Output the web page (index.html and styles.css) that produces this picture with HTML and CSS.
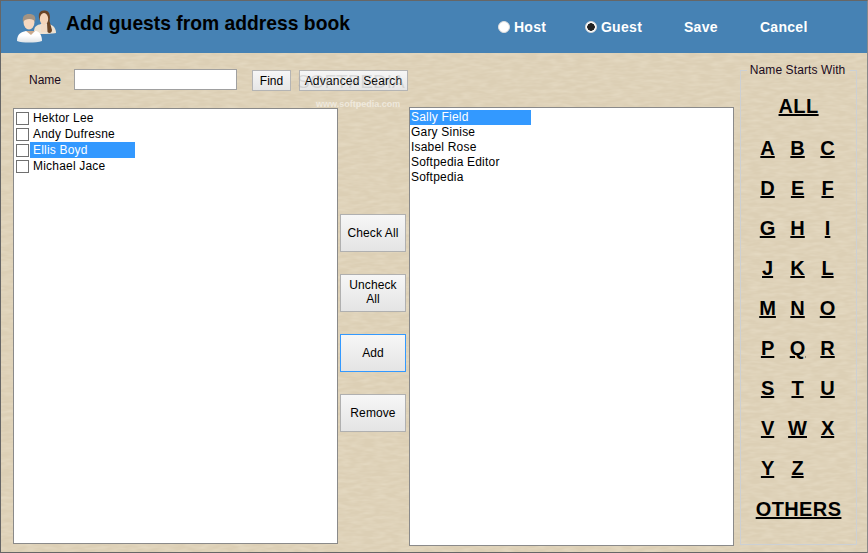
FILE: index.html
```html
<!DOCTYPE html>
<html lang="en">
<head>
    <meta charset="UTF-8">
    <meta name="viewport" content="width=device-width, initial-scale=1.0">
    <title>Add guests from address book</title>
    <link rel="stylesheet" href="styles.css">
</head>
<body>

<!-- Title bar -->
<header class="topbar">
    <svg class="guests-icon" width="54" height="44" viewBox="14 4 54 44">
        <defs>
            <filter id="soft"><feGaussianBlur stdDeviation="0.35"/></filter>
            <linearGradient id="shirt" x1="0" y1="0" x2="0" y2="1">
                <stop offset="0.4" stop-color="#ffffff"/>
                <stop offset="1" stop-color="#dfe3e6"/>
            </linearGradient>
        </defs>
        <g filter="url(#soft)">
            <!-- woman, behind -->
            <path d="M34 31 C34 25 37 24 41 23 L49 23 C53 24 56 27 56 32 C54 33 38 33 35 33 Z" fill="#eee2d2"/>
            <path d="M39.500 19 C38 13 39 10 44 9.500 C49 9 51 14 49.500 20 L52 29 C52 32 49 33 47.500 31 L47 22 Z" fill="#6b4526"/>
            <ellipse cx="44" cy="18" rx="4.200" ry="6" fill="#f5d6ba"/>
            <path d="M41 24 L47 24 L47 31 L41 31 Z" fill="#f2dcc6"/>
            <!-- man, in front -->
            <path d="M17 40 C17 33 21 31 26 30 L36 30 C40 31 42 35 42 40 C36 42 22 42 17 40 Z" fill="url(#shirt)"/>
            <path d="M26 30 L35 30 L31 34 Z" fill="#c9a98d"/>
            <ellipse cx="29" cy="21" rx="5.500" ry="7.500" fill="#f5d8c0"/>
            <path d="M23 21 C22 15 25 13 29 13 C34 13 36 15 35 21 C34 17 25 17 23 21 Z" fill="#a39382"/>
        </g>
    </svg>
    <h1 class="page-title">Add guests from address book</h1>
    <div class="top-actions">
        <label class="radio-item host-item"><span class="radio"></span>Host</label>
        <label class="radio-item guest-item"><span class="radio checked"></span>Guest</label>
        <a class="top-link save-link">Save</a>
        <a class="top-link">Cancel</a>
    </div>
</header>

<div class="main">
    <div class="picker">
        <!-- Search row -->
        <div class="search-row">
            <label class="name-label" for="name">Name</label>
            <input class="name-input" type="text" id="name">
            <button class="small-btn find-btn">Find</button>
            <button class="small-btn adv-btn">Advanced Search</button>
            <span class="mark-big">SOFTPEDIA</span>
            <span class="mark-small">www.softpedia.com</span>
        </div>

        <div class="lists">
            <ul class="list check-list">
                <li><span class="box"></span><span class="check-name">Hektor Lee</span></li>
                <li><span class="box"></span><span class="check-name">Andy Dufresne</span></li>
                <li><span class="box"></span><span class="check-name selected">Ellis Boyd</span></li>
                <li><span class="box"></span><span class="check-name">Michael Jace</span></li>
            </ul>

            <div class="move-btns">
                <button class="move-btn">Check All</button>
                <button class="move-btn two-line">Uncheck All</button>
                <button class="move-btn focused">Add</button>
                <button class="move-btn">Remove</button>
            </div>

            <ul class="list guest-list">
                <li class="selected">Sally Field</li>
                <li>Gary Sinise</li>
                <li>Isabel Rose</li>
                <li>Softpedia Editor</li>
                <li>Softpedia</li>
            </ul>
        </div>
    </div>

    <!-- Alphabet filter -->
    <fieldset class="letters">
        <legend>Name Starts With</legend>
        <a class="wide-letter all-letter" href="#">ALL</a>
        <div class="letter-grid">
            <a href="#">A</a><a href="#">B</a><a href="#">C</a>
            <a href="#">D</a><a href="#">E</a><a href="#">F</a>
            <a href="#">G</a><a href="#">H</a><a href="#">I</a>
            <a href="#">J</a><a href="#">K</a><a href="#">L</a>
            <a href="#">M</a><a href="#">N</a><a href="#">O</a>
            <a href="#">P</a><a href="#">Q</a><a href="#">R</a>
            <a href="#">S</a><a href="#">T</a><a href="#">U</a>
            <a href="#">V</a><a href="#">W</a><a href="#">X</a>
            <a href="#">Y</a><a href="#">Z</a>
        </div>
        <a class="wide-letter" href="#">OTHERS</a>
    </fieldset>
</div>

</body>
</html>
```

FILE: styles.css
```css
/* General styles */
* {
    box-sizing: border-box;
}

html, body {
    height: 100%;
}

body {
    margin: 0;
    font-family: "Liberation Sans", Arial, sans-serif;
    font-size: 12px;
    color: #000;
    background-color: #dccfb5;
    background-image: url("data:image/svg+xml,%3Csvg xmlns='http://www.w3.org/2000/svg' width='868' height='553'%3E%3Cfilter id='t'%3E%3CfeTurbulence type='fractalNoise' baseFrequency='.08 .3' numOctaves='2'/%3E%3CfeColorMatrix values='0 0 0 0 1 0 0 0 0 .95 0 0 0 0 .82 .42 0 0 0 -.14'/%3E%3C/filter%3E%3Crect width='868' height='553' filter='url(%23t)'/%3E%3C/svg%3E");
    border: 1px solid #666;
    border-right-color: #888;
    overflow: hidden;
    display: flex;
    flex-direction: column;
}

/* Title bar */
.topbar {
    height: 52px;
    flex-shrink: 0;
    background-color: #4682b4;
    display: flex;
    align-items: center;
    padding-left: 13px;
}

.guests-icon {
    flex-shrink: 0;
}

.page-title {
    margin: -7px 0 0 -2px;
    font-size: 19.3px;
    font-weight: bold;
    white-space: nowrap;
}

.top-actions {
    display: flex;
    align-items: center;
    margin: -1px 0 0 148px;
    color: #fff;
    font-size: 14px;
    font-weight: bold;
    letter-spacing: .3px;
}

.radio-item {
    display: flex;
    align-items: center;
    gap: 4px;
}

.host-item {
    width: 87px;
}

.guest-item {
    width: 99px;
}

.radio {
    width: 12px;
    height: 12px;
    border-radius: 50%;
    background: #fff;
    border: 1px solid #ddd;
}

.radio.checked {
    background: radial-gradient(circle, #222 3.5px, #fff 4px);
}

.top-link {
    white-space: nowrap;
}

.save-link {
    width: 76px;
}

/* Main area */
.main {
    flex: 1;
    min-height: 0;
    display: flex;
    padding: 0 10px 7px 12px;
}

.picker {
    width: 722px;
    display: flex;
    flex-direction: column;
}

.search-row {
    position: relative;
    height: 55px;
    flex-shrink: 0;
    display: flex;
    align-items: flex-start;
    padding-top: 16px;
}

.name-label {
    margin: 4px 0 0 16px;
    width: 45px;
    font-size: 12px;
    color: #1a0a20;
}

.name-input {
    width: 163px;
    height: 21px;
    border: 1px solid #a0a0a0;
    background: #fff;
    padding: 0;
    margin-right: 15px;
}

.small-btn {
    height: 21px;
    margin-top: 1px;
    padding: 0;
    font-family: inherit;
    font-size: 12px;
    color: #000;
    border: 1px solid #b4b4b4;
    background: linear-gradient(#f6f6f6, #e6e6e6);
}

.find-btn {
    width: 39px;
    margin-right: 8px;
}

.adv-btn {
    width: 109px;
    letter-spacing: .2px;
}

/* Softpedia watermark */
.mark-big {
    position: absolute;
    left: 284px;
    top: 18px;
    font-size: 19px;
    color: rgba(170, 170, 170, .35);
}

.mark-small {
    position: absolute;
    left: 303px;
    top: 46px;
    font-size: 9px;
    font-weight: bold;
    color: rgba(255, 255, 255, .5);
}

/* Lists */
.lists {
    flex: 1;
    min-height: 0;
    display: flex;
}

.list {
    list-style-type: none;
    margin: 0;
    background: #fff;
    border: 1px solid #8a8a8a;
}

.check-list {
    width: 325px;
    height: 436px;
    padding: 1px 0 0 2px;
}

.check-list li {
    display: flex;
    align-items: center;
    height: 16px;
}

.box {
    width: 13px;
    height: 13px;
    border: 1px solid #707070;
    background: #fff;
    flex-shrink: 0;
}

.check-name {
    padding-left: 3px;
    width: 105px;
    height: 16px;
    line-height: 16px;
    margin-left: 1px;
    letter-spacing: .2px;
}

.selected {
    background-color: #3399ff;
    color: #fff;
}

.guest-list {
    width: 325px;
    height: 439px;
    margin: -1px 0 0 3px;
    padding: 2px 0 0 0;
}

.guest-list li {
    width: 121px;
    height: 15px;
    line-height: 15px;
    padding-left: 1px;
    letter-spacing: .2px;
}

/* Middle buttons */
.move-btns {
    width: 66px;
    margin: 106px 0 0 2px;
    display: flex;
    flex-direction: column;
    gap: 22px;
}

.move-btn {
    height: 38px;
    padding: 0 4px;
    font-family: inherit;
    font-size: 12px;
    line-height: 14px;
    letter-spacing: .1px;
    color: #000;
    border: 1px solid #b0b0b0;
    background: linear-gradient(#f6f6f6, #e4e4e4);
}

.move-btn.two-line {
    padding-bottom: 2px;
}

.move-btn.focused {
    border-color: #3399ff;
}

/* Alphabet filter */
.letters {
    margin: 10px 0 0 6px;
    width: 117px;
    padding: 0;
    border: 1px solid #ccd0d4;
    text-align: center;
    display: flex;
    flex-direction: column;
}

.letters legend {
    padding: 0 4px;
    margin: 0 auto;
    font-size: 12px;
    letter-spacing: .1px;
    color: #1a0a20;
    transform: translateX(-1px);
}

.letters a {
    color: #000;
    font-size: 20px;
    font-weight: bold;
}

.wide-letter {
    display: block;
    letter-spacing: .4px;
}

.all-letter {
    margin-top: 18px;
}

.letter-grid {
    display: grid;
    grid-template-columns: repeat(3, 30px);
    grid-auto-rows: 40px;
    align-items: center;
    justify-content: center;
    margin: 10px 2px 10px 0;
}
```
